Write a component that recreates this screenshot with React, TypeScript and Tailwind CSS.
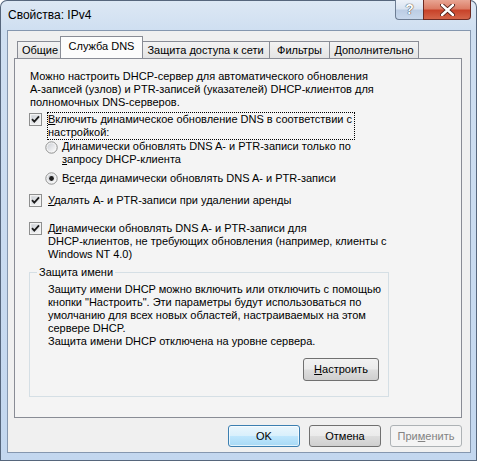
import React from 'react'

const font = "font-['Liberation_Sans',Arial,sans-serif]"

function CheckBox() {
  return (
    <svg width="13" height="13" viewBox="0 0 13 13" className="shrink-0">
      <defs>
        <linearGradient id="cbg" x1="0" y1="0" x2="1" y2="1">
          <stop offset="0" stopColor="#cbcfd5" />
          <stop offset="1" stopColor="#f7f7f7" />
        </linearGradient>
      </defs>
      <rect x="0.5" y="0.5" width="12" height="12" fill="#f4f4f4" stroke="#8e8f8f" />
      <rect x="2" y="2" width="9" height="9" fill="url(#cbg)" stroke="#f2f2f2" strokeWidth="0.6" />
      <path d="M3 6.2 L5.3 8.6 L10 3.4" fill="none" stroke="#1c1c1c" strokeWidth="1.8" />
    </svg>
  )
}

function Radio({ checked }: { checked?: boolean }) {
  return (
    <svg width="13" height="13" viewBox="0 0 13 13" className="shrink-0">
      <defs>
        <linearGradient id="rbg" x1="0" y1="0" x2="1" y2="1">
          <stop offset="0" stopColor="#cdd0d6" />
          <stop offset="1" stopColor="#fbfbfb" />
        </linearGradient>
      </defs>
      <circle cx="6.5" cy="6.5" r="5.7" fill="#f7f7f7" stroke="#8e8f8f" strokeWidth="1" />
      <circle cx="6.5" cy="6.5" r="4.2" fill="url(#rbg)" />
      {checked && <circle cx="6.5" cy="6.5" r="2.4" fill="#1e1e1e" />}
    </svg>
  )
}

function Button({
  children,
  variant = 'normal',
  className = '',
}: {
  children: React.ReactNode
  variant?: 'normal' | 'default' | 'disabled'
  className?: string
}) {
  const styles = {
    normal:
      'border-[#707070] bg-[linear-gradient(#f2f2f2_0%,#ebebeb_48%,#dddddd_52%,#cfcfcf_100%)] text-black',
    default:
      'border-[#3c7fb1] bg-[linear-gradient(#eaf6fd_0%,#d9f0fc_48%,#bee6fd_52%,#a7d9f5_100%)] text-black shadow-[inset_0_0_0_1px_#ffffffaa]',
    disabled: 'border-[#adb2b5] bg-[#f4f4f4] text-[#838383]',
  }[variant]
  return (
    <div
      className={`flex items-center justify-center rounded-[3px] border ${styles} ${className}`}
    >
      {children}
    </div>
  )
}

function Tab({ label, width, selected }: { label: string; width: string; selected?: boolean }) {
  if (selected) {
    return (
      <div
        className={`relative z-10 -mx-[2px] flex h-[22px] ${width} shrink-0 items-start justify-center border border-b-0 border-[#898c95] bg-[#fcfcfc] pt-[3px]`}
      >
        {label}
      </div>
    )
  }
  return (
    <div
      className={`flex h-[17px] ${width} shrink-0 items-center justify-center border border-b-0 border-r-0 border-[#898c95] bg-[linear-gradient(#f3f3f3,#e4e4e4)] pt-[1px] last:border-r`}
    >
      {label}
    </div>
  )
}

export default function App() {
  return (
    <div
      className={`${font} relative h-[461px] w-[477px] overflow-hidden rounded-t-[7px] bg-[linear-gradient(#dde8f4_0px,#cfdff1_30px,#c3d7ef_100%)] text-[11px] leading-[13px] text-black shadow-[inset_0_0_0_1px_#56667c]`}
    >
      {/* title bar */}
      <div className="flex h-[30px] items-start justify-between">
        <div className="ml-[8px] mt-[8px] text-[12px] leading-[15px] text-black">Свойства: IPv4</div>
        <div className="mr-[6px] flex">
          <div className="flex h-[20px] w-[28px] items-center justify-center rounded-bl-[4px] border border-r-0 border-t-0 border-[#6d7d93] bg-[linear-gradient(#edf2f9_0%,#dae4f1_45%,#bccde4_55%,#c8d8ec_100%)] text-[14px] font-bold text-white [text-shadow:0_0_1px_#333,0_0_1px_#333]">
            ?
          </div>
          <div className="flex h-[20px] w-[48px] items-center justify-center rounded-br-[4px] border border-t-0 border-[#6e2a22] bg-[linear-gradient(#e8a593_0%,#dc7d66_45%,#c8432a_55%,#d4654a_100%)]">
            <svg width="15" height="12" viewBox="0 0 15 12">
              <path
                d="M2 1 L13 11 M13 1 L2 11"
                stroke="#4a1a14"
                strokeWidth="4.2"
                strokeLinecap="round"
              />
              <path
                d="M2 1 L13 11 M13 1 L2 11"
                stroke="#ffffff"
                strokeWidth="2.4"
                strokeLinecap="round"
              />
            </svg>
          </div>
        </div>
      </div>

      {/* client area */}
      <div className="ml-[7px] flex h-[423px] w-[464px] flex-col border border-[#8597af] bg-[#f0f0f0]">
        {/* tabs */}
        <div className="relative ml-[9px] mt-[6px] flex h-[21px] items-end">
          <Tab label="Общие" width="w-[45px]" />
          <Tab label="Служба DNS" width="w-[83px]" selected />
          <Tab label="Защита доступа к сети" width="w-[128px]" />
          <Tab label="Фильтры" width="w-[60px]" />
          <Tab label="Дополнительно" width="w-[90px]" />
        </div>

        {/* panel */}
        <div className="ml-[6px] h-[360px] w-[448px] border border-[#898c95] bg-[#f4f4f4]">
          <div className="flex flex-col pl-[14px] pt-[11px]">
            <div className="pl-[1px]">
              <div>Можно настроить DHCP-сервер для автоматического обновления</div>
              <div>А-записей (узлов) и PTR-записей (указателей) DHCP-клиентов для</div>
              <div>полномочных DNS-серверов.</div>
            </div>

            <div className="mt-[3px] flex items-start">
              <div className="mt-[1px]">
                <CheckBox />
              </div>
              <div className="ml-[5px] w-[308px] border border-dotted border-black">
                <div>
                  <u>В</u>ключить динамическое обновление DNS в соответствии с
                </div>
                <div>настройкой:</div>
              </div>
            </div>

            <div className="ml-[16px] flex items-start">
              <div className="mt-[1px]">
                <Radio />
              </div>
              <div className="ml-[4px]">
                <div>Динамически обновлять DNS A- и PTR-записи только по</div>
                <div>
                  <u>з</u>апросу DHCP-клиента
                </div>
              </div>
            </div>

            <div className="ml-[16px] mt-[6px] flex items-start">
              <div className="mt-[0px]">
                <Radio checked />
              </div>
              <div className="ml-[4px]">
                В<u>с</u>егда динамически обновлять DNS A- и PTR-записи
              </div>
            </div>

            <div className="mt-[9px] flex items-start">
              <CheckBox />
              <div className="ml-[6px]">
                <u>У</u>далять A- и PTR-записи при удалении аренды
              </div>
            </div>

            <div className="mt-[15px] flex items-start">
              <CheckBox />
              <div className="ml-[6px]">
                <div>
                  Д<u>и</u>намически обновлять DNS A- и PTR-записи для
                </div>
                <div>DHCP-клиентов, не требующих обновления (например, клиенты с</div>
                <div>Windows NT 4.0)</div>
              </div>
            </div>

            <fieldset className="mt-[5px] flex h-[131px] w-[360px] flex-col border border-[#d5dfe5] shadow-[inset_0_0_0_1px_#ffffff00]">
              <legend className="ml-[7px] px-[2px]">Защита имени</legend>
              <div className="pl-[18px] pt-[4px]">
                <div>Защиту имени DHCP можно включить или отключить с помощью</div>
                <div>кнопки "Настроить". Эти параметры будут использоваться по</div>
                <div>умолчанию для всех новых областей, настраиваемых на этом</div>
                <div>сервере DHCP.</div>
                <div>Защита имени DHCP отключена на уровне сервера.</div>
              </div>
              <div className="mr-[9px] mt-[10px] flex justify-end">
                <Button className="h-[23px] w-[76px]">
                  <span>
                    <u>Н</u>астроить
                  </span>
                </Button>
              </div>
            </fieldset>
          </div>
        </div>

        {/* dialog buttons */}
        <div className="mr-[8px] mt-[7px] flex justify-end gap-[9px]">
          <Button variant="default" className="h-[22px] w-[72px]">
            OK
          </Button>
          <Button className="h-[22px] w-[72px]">Отмена</Button>
          <Button variant="disabled" className="h-[22px] w-[72px]">
            <span>
              При<u>м</u>енить
            </span>
          </Button>
        </div>
      </div>
    </div>
  )
}
